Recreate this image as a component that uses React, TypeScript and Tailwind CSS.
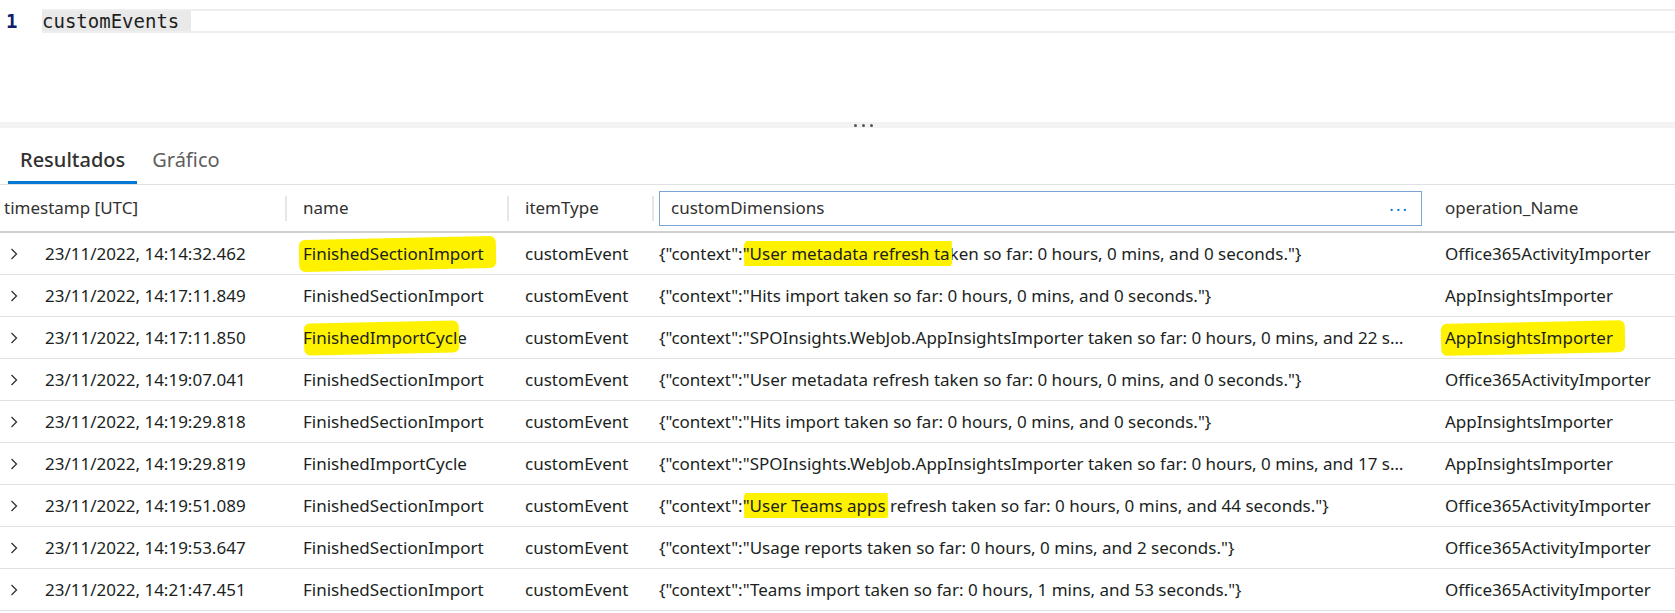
import React from "react";

type Row = {
  ts: string;
  name: string;
  ctx: string;
  op: string;
  hlName?: number; // chars of name that are marked
  hlCtx?: string; // marked prefix of the context text
  hlOp?: boolean;
};

const ROWS: Row[] = [
  {
    ts: "23/11/2022, 14:14:32.462",
    name: "FinishedSectionImport",
    ctx: "User metadata refresh taken so far: 0 hours, 0 mins, and 0 seconds.",
    op: "Office365ActivityImporter",
    hlName: 21,
    hlCtx: "User metadata refresh ta",
  },
  {
    ts: "23/11/2022, 14:17:11.849",
    name: "FinishedSectionImport",
    ctx: "Hits import taken so far: 0 hours, 0 mins, and 0 seconds.",
    op: "AppInsightsImporter",
  },
  {
    ts: "23/11/2022, 14:17:11.850",
    name: "FinishedImportCycle",
    ctx: "SPOInsights.WebJob.AppInsightsImporter taken so far: 0 hours, 0 mins, and 22 seconds.",
    op: "AppInsightsImporter",
    hlName: 18,
    hlOp: true,
  },
  {
    ts: "23/11/2022, 14:19:07.041",
    name: "FinishedSectionImport",
    ctx: "User metadata refresh taken so far: 0 hours, 0 mins, and 0 seconds.",
    op: "Office365ActivityImporter",
  },
  {
    ts: "23/11/2022, 14:19:29.818",
    name: "FinishedSectionImport",
    ctx: "Hits import taken so far: 0 hours, 0 mins, and 0 seconds.",
    op: "AppInsightsImporter",
  },
  {
    ts: "23/11/2022, 14:19:29.819",
    name: "FinishedImportCycle",
    ctx: "SPOInsights.WebJob.AppInsightsImporter taken so far: 0 hours, 0 mins, and 17 seconds.",
    op: "AppInsightsImporter",
  },
  {
    ts: "23/11/2022, 14:19:51.089",
    name: "FinishedSectionImport",
    ctx: "User Teams apps refresh taken so far: 0 hours, 0 mins, and 44 seconds.",
    op: "Office365ActivityImporter",
    hlCtx: "User Teams apps",
  },
  {
    ts: "23/11/2022, 14:19:53.647",
    name: "FinishedSectionImport",
    ctx: "Usage reports taken so far: 0 hours, 0 mins, and 2 seconds.",
    op: "Office365ActivityImporter",
  },
  {
    ts: "23/11/2022, 14:21:47.451",
    name: "FinishedSectionImport",
    ctx: "Teams import taken so far: 0 hours, 1 mins, and 53 seconds.",
    op: "Office365ActivityImporter",
  },
];

const COLS = "grid grid-cols-[285px_222px_145px_780px_1fr]";

// hand-drawn marker stroke behind some text
function Mark({ children, wide = false }: { children: React.ReactNode; wide?: boolean }) {
  return (
    <span className="relative inline-block">
      <span
        className={
          "absolute -top-[3px] -bottom-[3px] -rotate-[1.2deg] rounded-[6px] bg-[#fff200] " +
          (wide ? "-left-[4px] -right-[12px]" : "left-[1px] -right-[2px]")
        }
      />
      <span className="relative">{children}</span>
    </span>
  );
}

function Chevron() {
  return (
    <svg width="8" height="12" viewBox="0 0 8 12" className="shrink-0">
      <polyline points="1.5,1 6.5,6 1.5,11" fill="none" stroke="#323130" strokeWidth="1.3" />
    </svg>
  );
}

function HeaderSep() {
  return <div className="h-[25px] w-[2px] bg-[#e6e6e6]" />;
}

export default function App() {
  return (
    <div className="h-[613px] w-[1675px] overflow-hidden bg-white text-[#201f1e] font-['Noto_Sans',sans-serif]">
      {/* query editor */}
      <div className="h-[122px] pt-[9px]">
        <div className="flex h-[24px] items-stretch font-['DejaVu_Sans_Mono',monospace] text-[19px] leading-none">
          <div className="flex w-[42px] items-center pl-[6px] font-bold text-[#0b216f]">1</div>
          <div className="flex flex-1 border-y-2 border-[#eeeeee]">
            <span className="flex items-center bg-[#e9e9e9] pr-[12px] text-[#1e1e1e]">customEvents</span>
          </div>
        </div>
      </div>

      {/* splitter */}
      <div className="flex h-[6px] items-center justify-center gap-[5px] bg-[#f3f3f3] pl-[52px]">
        <span className="h-[3px] w-[3px] rounded-full bg-[#555]" />
        <span className="h-[3px] w-[3px] rounded-full bg-[#555]" />
        <span className="h-[3px] w-[3px] rounded-full bg-[#555]" />
      </div>

      {/* tabs */}
      <div className="flex h-[57px] items-end border-b border-[#e1e1e1] pl-[8px] text-[20px]">
        <div className="border-b-[3px] border-[#0078d4] px-[12px] pb-[6px] font-medium text-[#323130]">
          Resultados
        </div>
        <div className="px-[15px] pb-[9px] text-[#605e5c]">Gráfico</div>
      </div>

      {/* results grid */}
      <div className="text-[17px]">
        <div className={COLS + " h-[48px] items-center border-b-2 border-[#d0d0d0] text-[#323130]"}>
          <div className="pl-[4px]">timestamp [UTC]</div>
          <div className="flex items-center gap-[16px]">
            <HeaderSep />
            <span>name</span>
          </div>
          <div className="flex items-center gap-[16px]">
            <HeaderSep />
            <span>itemType</span>
          </div>
          <div className="flex items-center">
            <HeaderSep />
            <div className="ml-[5px] flex h-[35px] w-[763px] items-center justify-between border border-[#7aa3d6] pl-[11px] pr-[12px]">
              <span>customDimensions</span>
              <span className="pb-[6px] text-[#0078d4] tracking-[2px]">...</span>
            </div>
          </div>
          <div className="pl-[13px]">operation_Name</div>
        </div>

        {ROWS.map((r) => {
          const nameMarked = r.hlName ? r.name.slice(0, r.hlName) : "";
          const nameRest = r.name.slice(r.hlName ?? 0);
          const ctxRest = r.hlCtx ? r.ctx.slice(r.hlCtx.length) : r.ctx;
          return (
            <div key={r.ts} className={COLS + " h-[42px] items-center border-b border-[#e1e1e1]"}>
              <div className="flex items-center">
                <div className="flex w-[45px] pl-[10px]">
                  <Chevron />
                </div>
                <span>{r.ts}</span>
              </div>
              <div className="pl-[18px]">
                {nameMarked && <Mark wide={r.hlName === 21}>{nameMarked}</Mark>}
                {nameRest}
              </div>
              <div className="pl-[18px]">customEvent</div>
              <div className="min-w-0 truncate pl-[7px] pr-[20px]">
                {'{"context":'}
                {r.hlCtx ? <Mark>{'"' + r.hlCtx}</Mark> : '"'}
                {ctxRest + '"}'}
              </div>
              <div className="pl-[13px]">
                {r.hlOp ? <Mark wide>{r.op}</Mark> : r.op}
              </div>
            </div>
          );
        })}
      </div>
    </div>
  );
}
